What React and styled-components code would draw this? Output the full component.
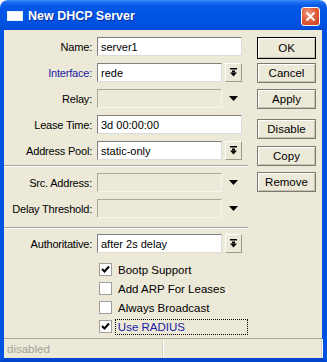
import React from "react";
import styled, { createGlobalStyle } from "styled-components";

const Global = createGlobalStyle`
  html, body { margin: 0; padding: 0; background: #fff; }
  body { font-family: "Liberation Sans", Arial, sans-serif; font-size: 11px; }
`;

const Window = styled.div`
  width: 327px;
  height: 362px;
  display: flex;
  flex-direction: column;
  box-sizing: border-box;
`;

const TitleBar = styled.div`
  height: 30px;
  flex: none;
  border-radius: 8px 8px 0 0;
  background: linear-gradient(to bottom, #3f8cf3 0%, #1a6ef2 8%, #0758e6 20%, #0055e5 50%, #0050df 85%, #0049d4 100%);
  display: flex;
  align-items: center;
  padding: 0 7px 0 7px;
  box-sizing: border-box;
  position: relative;
`;

const TitleIcon = styled.div`
  width: 16px;
  height: 10px;
  background: #fff;
  box-shadow: inset 0 0 0 1px #e8eefc;
  margin-right: 5px;
  margin-top: 1px;
`;

const TitleText = styled.div`
  color: #fff;
  font-weight: bold;
  font-size: 12.5px;
  text-shadow: 1px 1px 0 #0f2fa0;
  flex: 1;
  margin-top: 1px;
`;

const CloseButton = styled.div`
  width: 19px;
  height: 19px;
  box-sizing: border-box;
  border: 1px solid #fff;
  border-radius: 3px;
  background: radial-gradient(circle at 35% 30%, #f09b7f 0%, #e2603c 45%, #c8401d 100%);
  display: flex;
  align-items: center;
  justify-content: center;
  margin-top: 2px;
`;

const Frame = styled.div`
  flex: 1;
  display: flex;
  border-left: 4px solid #0052e0;
  border-right: 5px solid #0052e0;
  border-bottom: 4px solid #0045cc;
  background: #ece9d8;
  box-sizing: border-box;
  min-height: 0;
`;

const Client = styled.div`
  flex: 1;
  display: flex;
  flex-direction: column;
  min-width: 0;
`;

const Main = styled.div`
  flex: 1;
  display: flex;
  padding-top: 7px;
`;

const Form = styled.div`
  width: 244px;
  display: flex;
  flex-direction: column;
`;

const Row = styled.div`
  height: 19px;
  display: flex;
  align-items: center;
  margin-bottom: ${(p) => p.$mb ?? 7}px;
`;

const Label = styled.div`
  width: 88px;
  text-align: right;
  padding-right: 5px;
  box-sizing: content-box;
  color: ${(p) => (p.$link ? "#1a1aa6" : "#000")};
  white-space: nowrap;
  letter-spacing: -0.2px;
`;

const Input = styled.div`
  width: ${(p) => p.$w}px;
  height: 19px;
  box-sizing: border-box;
  border: 1px solid;
  border-color: ${(p) => (p.$disabled ? "#aca899 #f5f4ee #f5f4ee #aca899" : "#808080 #dcdcdc #dcdcdc #808080")};
  background: ${(p) => (p.$disabled ? "#ece9d8" : "#fff")};
  padding-left: 3px;
  display: flex;
  align-items: center;
  color: #000;
  white-space: nowrap;
`;

const DropButton = styled.div`
  width: 17px;
  height: 19px;
  margin-left: 3px;
  box-sizing: border-box;
  border: 1px solid;
  border-color: #fff #9d9a8a #9d9a8a #fff;
  background: #ece9d8;
  display: flex;
  align-items: center;
  justify-content: center;
`;

const ArrowArea = styled.div`
  width: 20px;
  height: 19px;
  display: flex;
  align-items: center;
  justify-content: center;
  padding-left: 2px;
  box-sizing: border-box;
`;

const Separator = styled.div`
  height: 0;
  border-top: 1px solid #aca899;
  border-bottom: 1px solid #fff;
  margin: ${(p) => p.$m};
  width: 244px;
`;

const CheckRow = styled.div`
  height: 19px;
  display: flex;
  align-items: center;
  padding-left: 95px;
`;

const Box = styled.div`
  width: 13px;
  height: 13px;
  box-sizing: border-box;
  border: 1px solid #9e9e9e;
  background: #fff;
  display: flex;
  align-items: center;
  justify-content: center;
  margin-right: 3px;
`;

const CheckText = styled.div`
  padding: 1px 2px;
  border: 1px ${(p) => (p.$focus ? "dotted #000" : "solid transparent")};
  color: ${(p) => (p.$focus ? "#1a1aa6" : "#000")};
  width: ${(p) => (p.$focus ? "129px" : "auto")};
  white-space: nowrap;
  font-size: 11.5px;
`;

const Buttons = styled.div`
  display: flex;
  flex-direction: column;
  margin-left: 9px;
  width: 59px;
`;

const Button = styled.div`
  height: ${(p) => (p.$default ? 22 : 20)}px;
  box-sizing: border-box;
  border: 1px solid ${(p) => (p.$default ? "#000" : "#7a7a70")};
  box-shadow: inset 1px 1px 0 #fff, inset -1px -1px 0 #c5c2b2;
  background: #ece9d8;
  display: flex;
  align-items: center;
  justify-content: center;
  font-size: 11.5px;
  margin-bottom: ${(p) => p.$mb}px;
  color: #000;
`;

const StatusBar = styled.div`
  height: 20px;
  flex: none;
  border-top: 1px solid #aca899;
  display: flex;
  box-sizing: border-box;
`;

const StatusCell = styled.div`
  width: ${(p) => p.$w}px;
  flex: ${(p) => (p.$w ? "none" : 1)};
  border-right: 1px solid #d6d3c6;
  box-shadow: 1px 0 0 #fff;
  color: #a6a39a;
  padding-left: 3px;
  display: flex;
  align-items: center;
  box-sizing: border-box;
  font-size: 11.5px;
`;

const PickIcon = () => (
  <svg width="7" height="9" viewBox="0 0 7 9">
    <rect x="0" y="0" width="7" height="1.5" fill="#000" />
    <rect x="2" y="2.5" width="3" height="2" fill="#000" />
    <polygon points="0,4.5 7,4.5 3.5,8.5" fill="#000" />
  </svg>
);

const TriIcon = () => (
  <svg width="9" height="5" viewBox="0 0 9 5">
    <polygon points="0,0 9,0 4.5,5" fill="#000" />
  </svg>
);

const Check = () => (
  <svg width="9" height="9" viewBox="0 0 9 9">
    <path d="M1 4 L3.5 6.5 L8 1.5" stroke="#000" strokeWidth="2" fill="none" />
  </svg>
);

const CloseX = () => (
  <svg width="11" height="11" viewBox="0 0 11 11">
    <path d="M1.5 1.5 L9.5 9.5 M9.5 1.5 L1.5 9.5" stroke="#fff" strokeWidth="2" />
  </svg>
);

const FieldFull = ({ label, value, mb }) => (
  <Row $mb={mb}>
    <Label>{label}</Label>
    <Input $w={145}>{value}</Input>
  </Row>
);

const FieldPick = ({ label, value, link, mb }) => (
  <Row $mb={mb}>
    <Label $link={link}>{label}</Label>
    <Input $w={125}>{value}</Input>
    <DropButton>
      <PickIcon />
    </DropButton>
  </Row>
);

const FieldDisabled = ({ label, mb }) => (
  <Row $mb={mb}>
    <Label>{label}</Label>
    <Input $w={125} $disabled />
    <ArrowArea>
      <TriIcon />
    </ArrowArea>
  </Row>
);

const CheckItem = ({ checked, label, focus }) => (
  <CheckRow>
    <Box>{checked && <Check />}</Box>
    <CheckText $focus={focus}>{label}</CheckText>
  </CheckRow>
);

export default function App() {
  return (
    <>
      <Global />
      <Window>
        <TitleBar>
          <TitleIcon />
          <TitleText>New DHCP Server</TitleText>
          <CloseButton>
            <CloseX />
          </CloseButton>
        </TitleBar>
        <Frame>
          <Client>
            <Main>
              <Form>
                <FieldFull label="Name:" value="server1" />
                <FieldPick label="Interface:" value="rede" link />
                <FieldDisabled label="Relay:" />
                <FieldFull label="Lease Time:" value="3d 00:00:00" />
                <FieldPick label="Address Pool:" value="static-only" mb={0} />
                <Separator $m="5px 0 6px 0" />
                <FieldDisabled label="Src. Address:" />
                <FieldDisabled label="Delay Threshold:" mb={0} />
                <Separator $m="9px 0 5px 0" />
                <FieldPick label="Authoritative:" value="after 2s delay" mb={7} />
                <CheckItem checked label="Bootp Support" />
                <CheckItem label="Add ARP For Leases" />
                <CheckItem label="Always Broadcast" />
                <CheckItem checked label="Use RADIUS" focus />
              </Form>
              <Buttons>
                <Button $default $mb={4}>OK</Button>
                <Button $mb={6}>Cancel</Button>
                <Button $mb={10}>Apply</Button>
                <Button $mb={7}>Disable</Button>
                <Button $mb={6}>Copy</Button>
                <Button $mb={0}>Remove</Button>
              </Buttons>
            </Main>
            <StatusBar>
              <StatusCell $w={159}>disabled</StatusCell>
              <StatusCell />
            </StatusBar>
          </Client>
        </Frame>
      </Window>
    </>
  );
}
